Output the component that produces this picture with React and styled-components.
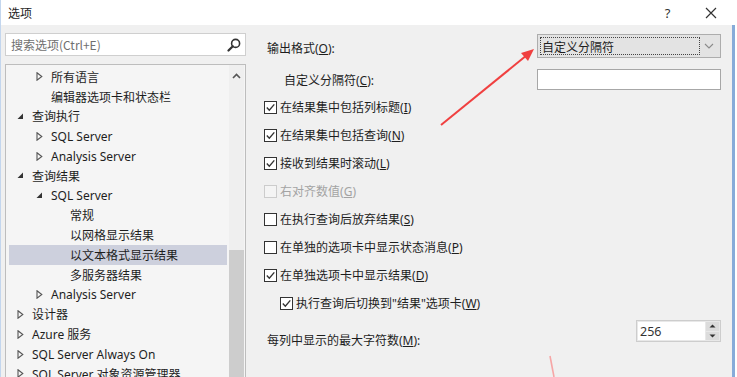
import React from 'react';
import styled, { createGlobalStyle } from 'styled-components';

const GlobalStyle = createGlobalStyle`
  html, body {
    margin: 0;
    padding: 0;
    background: #ffffff;
  }
  body {
    font-family: "Noto Sans", "Noto Sans CJK SC", sans-serif;
    font-size: 12px;
    color: #1e1e1e;
  }
`;

const treeItems = [
    { label: '所有语言', level: 1, arrow: 'closed' },
    { label: '编辑器选项卡和状态栏', level: 1 },
    { label: '查询执行', level: 0, arrow: 'open' },
    { label: 'SQL Server', level: 1, arrow: 'closed' },
    { label: 'Analysis Server', level: 1, arrow: 'closed' },
    { label: '查询结果', level: 0, arrow: 'open' },
    { label: 'SQL Server', level: 1, arrow: 'open' },
    { label: '常规', level: 2 },
    { label: '以网格显示结果', level: 2 },
    { label: '以文本格式显示结果', level: 2, selected: true },
    { label: '多服务器结果', level: 2 },
    { label: 'Analysis Server', level: 1, arrow: 'closed' },
    { label: '设计器', level: 0, arrow: 'closed' },
    { label: 'Azure 服务', level: 0, arrow: 'closed' },
    { label: 'SQL Server Always On', level: 0, arrow: 'closed' },
    { label: 'SQL Server 对象资源管理器', level: 0, arrow: 'closed' },
];

const checks = [
    { text: '在结果集中包括列标题', key: 'I', checked: true },
    { text: '在结果集中包括查询', key: 'N', checked: true },
    { text: '接收到结果时滚动', key: 'L', checked: true },
    { text: '右对齐数值', key: 'G', disabled: true },
    { text: '在执行查询后放弃结果', key: 'S' },
    { text: '在单独的选项卡中显示状态消息', key: 'P' },
    { text: '在单独选项卡中显示结果', key: 'D', checked: true },
    { text: '执行查询后切换到"结果"选项卡', key: 'W', checked: true, indent: true },
];

const Arrow = ({ type }) => {
    if (type === 'open') {
        return (
            <svg width="7" height="7" viewBox="0 0 7 7">
                <polygon points="6,0.5 6,6 0.5,6" fill="#333" />
            </svg>
        );
    }
    return (
        <svg width="7" height="9" viewBox="0 0 7 9">
            <polygon points="1,0.8 5.8,4.5 1,8.2" fill="none" stroke="#555" strokeWidth="1.1" />
        </svg>
    );
};

const CheckMark = () => (
    <svg width="11" height="11" viewBox="0 0 11 11">
        <polyline points="1.8,5.6 4.3,8.2 9.3,2.4" fill="none" stroke="#333" strokeWidth="1.4" />
    </svg>
);

const App = () => {
    return (
        <Window>
            <GlobalStyle />
            <TitleBar>
                <Title>选项</Title>
                <TitleButtons>
                    <TitleButton>?</TitleButton>
                    <TitleButton>
                        <svg width="12" height="12" viewBox="0 0 12 12">
                            <path d="M1 1 L11 11 M11 1 L1 11" stroke="#333" strokeWidth="1.2" />
                        </svg>
                    </TitleButton>
                </TitleButtons>
            </TitleBar>

            <Body>
                <LeftPane>
                    <SearchBox>
                        <Placeholder>搜索选项(Ctrl+E)</Placeholder>
                        <svg width="14" height="14" viewBox="0 0 14 14">
                            <circle cx="8.6" cy="5.4" r="4" fill="none" stroke="#333" strokeWidth="1.6" />
                            <path d="M5.8 8.2 L1.5 12.5" stroke="#333" strokeWidth="2.2" strokeLinecap="round" />
                        </svg>
                    </SearchBox>

                    <TreeBox>
                        <TreeList>
                            {treeItems.map((item, i) => (
                                <TreeRow key={i} $level={item.level} $selected={item.selected}>
                                    <ArrowSlot>{item.arrow && <Arrow type={item.arrow} />}</ArrowSlot>
                                    <span>{item.label}</span>
                                </TreeRow>
                            ))}
                        </TreeList>
                        <ScrollBar>
                            <ScrollButton>
                                <svg width="9" height="6" viewBox="0 0 9 6">
                                    <polyline points="1,5 4.5,1.5 8,5" fill="none" stroke="#555" strokeWidth="1.6" />
                                </svg>
                            </ScrollButton>
                            <Thumb />
                        </ScrollBar>
                    </TreeBox>
                </LeftPane>

                <RightPane>
                    <FieldRow $top={0}>
                        <FieldLabel $indent={3} $shift={3}>输出格式(<u>O</u>):</FieldLabel>
                        <ComboBox>
                            <ComboText>自定义分隔符</ComboText>
                            <svg width="10" height="6" viewBox="0 0 10 6">
                                <polyline points="1,1 5,5 9,1" fill="none" stroke="#8a8a8a" strokeWidth="1.1" />
                            </svg>
                        </ComboBox>
                    </FieldRow>

                    <FieldRow $top={11}>
                        <FieldLabel $indent={20} $shift={0}>自定义分隔符(<u>C</u>):</FieldLabel>
                        <TextInput />
                    </FieldRow>

                    <CheckList>
                        {checks.map((c, i) => (
                            <CheckRow key={i} $indent={c.indent} $disabled={c.disabled}>
                                <Box $disabled={c.disabled}>{c.checked && <CheckMark />}</Box>
                                <span>{c.text}(<u>{c.key}</u>)</span>
                            </CheckRow>
                        ))}
                    </CheckList>

                    <SpinRow>
                        <FieldLabel $indent={3} $shift={11}>每列中显示的最大字符数(<u>M</u>):</FieldLabel>
                        <SpinBox>
                            <SpinValue>256</SpinValue>
                            <SpinButtons>
                                <SpinButton>
                                    <svg width="7" height="4" viewBox="0 0 7 4"><polygon points="0.5,3.5 3.5,0.5 6.5,3.5" fill="#333" /></svg>
                                </SpinButton>
                                <SpinButton>
                                    <svg width="7" height="4" viewBox="0 0 7 4"><polygon points="0.5,0.5 6.5,0.5 3.5,3.5" fill="#333" /></svg>
                                </SpinButton>
                            </SpinButtons>
                        </SpinBox>
                    </SpinRow>
                </RightPane>
            </Body>

            {/* red annotation arrows drawn over the dialog */}
            <Annotation width="737" height="377" viewBox="0 0 737 377">
                <line x1="440" y1="125" x2="526" y2="55" stroke="#f04040" strokeWidth="2" />
                <polygon points="533,49 520,53 527,61" fill="#f04040" />
                <line x1="549" y1="356" x2="553" y2="377" stroke="#f6a6a6" strokeWidth="1.6" />
            </Annotation>
        </Window>
    );
}

export default App;

const Window = styled.div`
position: relative;
width: 737px;
height: 377px;
overflow: hidden;
display: flex;
flex-direction: column;
box-sizing: border-box;
border-left: 1px solid #c3d6ee;
`

const TitleBar = styled.div`
height: 25px;
flex-shrink: 0;
display: flex;
align-items: center;
justify-content: space-between;
padding-left: 7px;
padding-right: 5px;
background: #ffffff;
`

const Title = styled.div`
font-family: "Noto Sans CJK SC", sans-serif;
font-size: 12px;
color: #222;
`

const TitleButtons = styled.div`
display: flex;
`

const TitleButton = styled.div`
width: 43px;
height: 25px;
display: flex;
align-items: center;
justify-content: center;
font-size: 13px;
color: #333;
`

const Body = styled.div`
flex: 1;
display: flex;
background: #f0f0f0;
margin-right: 2px;
border-right: 3px solid #86abd9;
min-height: 0;
`

const LeftPane = styled.div`
width: 241px;
flex-shrink: 0;
display: flex;
flex-direction: column;
gap: 8px;
padding: 8px 0 0 4px;
`

const SearchBox = styled.div`
height: 23px;
box-sizing: border-box;
border: 1px solid #cfcfcf;
background: #ffffff;
display: flex;
align-items: center;
justify-content: space-between;
padding: 0 4px 0 5px;
`

const Placeholder = styled.span`
font-family: "Noto Sans CJK SC", sans-serif;
color: #6f6f6f;
font-size: 12px;
`

const TreeBox = styled.div`
flex: 1;
display: flex;
border: 1px solid #bdbdbd;
border-bottom: none;
background: #f5f5f5;
min-height: 0;
`

const TreeList = styled.div`
flex: 1;
padding: 2px 2px 0 3px;
`

const TreeRow = styled.div`
height: 19.8px;
display: flex;
align-items: center;
padding-left: ${p => 6 + p.$level * 19}px;
background: ${p => (p.$selected ? '#cdd0dd' : 'transparent')};
white-space: nowrap;
font-family: "Noto Sans", "Noto Sans CJK SC", sans-serif;
font-size: 12px;
color: #1e1e1e;
`

const ArrowSlot = styled.span`
width: 17px;
flex-shrink: 0;
display: flex;
align-items: center;
padding-left: 2px;
box-sizing: border-box;
`

const ScrollBar = styled.div`
width: 15px;
flex-shrink: 0;
display: flex;
flex-direction: column;
background: #efefef;
margin-right: 1px;
`

const ScrollButton = styled.div`
height: 22px;
display: flex;
align-items: center;
justify-content: center;
`

const Thumb = styled.div`
margin-top: 163px;
flex: 1;
background: #cdcdcd;
`

const RightPane = styled.div`
flex: 1;
padding: 9px 11px 0 18px;
display: flex;
flex-direction: column;
font-family: "Noto Sans", "Noto Sans CJK SC", sans-serif;
font-size: 12px;
`

const FieldRow = styled.div`
display: flex;
align-items: center;
justify-content: space-between;
margin-top: ${p => p.$top}px;
`

const FieldLabel = styled.span`
padding-left: ${p => p.$indent}px;
padding-top: ${p => p.$shift}px;
color: #1e1e1e;
u { text-underline-offset: 1px; }
`

const ComboBox = styled.div`
width: 184px;
height: 24px;
box-sizing: border-box;
border: 1px solid #adadad;
background: #e3e3e3;
display: flex;
align-items: center;
justify-content: space-between;
padding: 2px 6px 2px 2px;
`

const ComboText = styled.div`
flex: 0 0 160px;
height: 18px;
box-sizing: border-box;
border: 1px dotted #444;
display: flex;
align-items: center;
padding-left: 1px;
font-family: "Noto Sans CJK SC", sans-serif;
margin-right: 4px;
`

const TextInput = styled.div`
width: 184px;
height: 21px;
box-sizing: border-box;
border: 1px solid #a7a7a7;
background: #ffffff;
`

const CheckList = styled.div`
margin-top: 9px;
display: flex;
flex-direction: column;
gap: 12px;
`

const CheckRow = styled.div`
height: 16px;
display: flex;
align-items: center;
gap: 3px;
padding-left: ${p => (p.$indent ? 16 : 0)}px;
color: ${p => (p.$disabled ? '#a3a3a3' : '#1e1e1e')};
white-space: nowrap;
u { text-underline-offset: 1px; }
`

const Box = styled.span`
width: 13px;
height: 13px;
box-sizing: border-box;
border: 1px solid ${p => (p.$disabled ? '#cccccc' : '#333333')};
background: ${p => (p.$disabled ? '#f4f4f4' : '#ffffff')};
display: flex;
align-items: center;
justify-content: center;
flex-shrink: 0;
`

const SpinRow = styled.div`
margin-top: 9px;
display: flex;
align-items: flex-start;
justify-content: space-between;
`

const SpinBox = styled.div`
width: 85px;
height: 22px;
box-sizing: border-box;
border: 1px solid #cdcdcd;
background: #e8e8e8;
display: flex;
padding: 1px;
gap: 1px;
`

const SpinValue = styled.div`
flex: 1;
background: #ffffff;
display: flex;
align-items: center;
padding-left: 2px;
font-size: 12.5px;
color: #333;
`

const SpinButtons = styled.div`
width: 13px;
display: flex;
flex-direction: column;
gap: 1px;
`

const SpinButton = styled.div`
flex: 1;
background: #dcdcdc;
display: flex;
align-items: center;
justify-content: center;
`

const Annotation = styled.svg`
position: absolute;
left: 0;
top: 0;
pointer-events: none;
`
